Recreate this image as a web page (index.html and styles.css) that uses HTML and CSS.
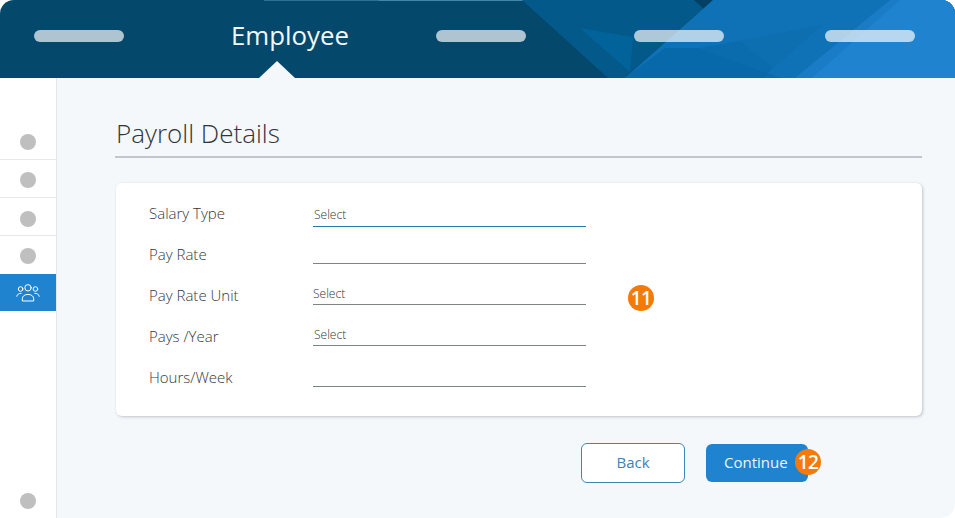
FILE: index.html
```html
<!DOCTYPE html>
<html lang="en">
<head>
<meta charset="utf-8">
<title>Payroll Details</title>
<link rel="stylesheet" href="styles.css">
</head>
<body>
<div class="app">
  <header class="top">
    <svg class="art" viewBox="0 0 955 78" width="955" height="78" aria-hidden="true">
      <rect x="264" y="0" width="115" height="1" fill="#2f6f92"/>
      <rect x="379" y="0" width="250" height="1" fill="#3f88a8"/>
      <polygon points="522,0 713,0 625,78 608,78" fill="#02598a"/>
      <polygon points="580,28 633,37 630,72" fill="#02639a"/>
      <polygon points="694,0 713,0 704,9" fill="#043f64"/>
      <polygon points="713,0 955,0 955,78 625,78" fill="#0f72b6"/>
      <polygon points="740,41 822,25 773,68" fill="#0d6eb0"/>
      <polygon points="625,78 665,48 699,48 780,78" fill="#0769aa"/>
      <polygon points="699,48 740,41 773,68 763,78 780,78" fill="#0a6cad"/>
      <polygon points="890,0 955,0 955,78 795,78" fill="#1a7cc6"/>
      <polygon points="900,0 955,0 955,78 812,78" fill="#2083d0"/>
    </svg>
    <nav class="steps">
      <span class="pill pill-first"></span>
      <span class="current">Employee</span>
      <span class="pill pill-third"></span>
      <span class="pill pill-fourth"></span>
      <span class="pill pill-fifth"></span>
    </nav>
    <span class="caret"></span>
  </header>
  <div class="body">
    <aside class="side">
      <ul class="side-list">
        <li class="side-item first"><span class="dot"></span></li>
        <li class="side-item second"><span class="dot"></span></li>
        <li class="side-item third"><span class="dot"></span></li>
        <li class="side-item fourth"><span class="dot"></span></li>
        <li class="side-item active">
          <svg viewBox="0 0 24 20" width="24" height="20" fill="none" stroke="#fff" stroke-width="1" stroke-linecap="round" aria-hidden="true">
            <circle cx="12" cy="4.800" r="3.200"/>
            <circle cx="4.600" cy="6" r="2.300"/>
            <circle cx="19.400" cy="6" r="2.300"/>
            <path d="M6.300 17.600v-1.800c0-2.600 2.300-4.400 5.700-4.400s5.700 1.800 5.700 4.400v1.800z"/>
            <path d="M.8 13.300c.4-2 2-3.100 4.300-3"/>
            <path d="M23.200 13.300c-.4-2-2-3.100-4.300-3"/>
          </svg>
        </li>
      </ul>
      <span class="dot"></span>
    </aside>
    <main class="main">
      <h1 class="title">Payroll Details</h1>
      <section class="card">
        <div class="form">
          <div class="row"><span class="label">Salary Type</span><span class="field focus">Select</span></div>
          <div class="row"><span class="label">Pay Rate</span><span class="field"></span></div>
          <div class="row"><span class="label">Pay Rate Unit</span><span class="field">Select</span></div>
          <div class="row"><span class="label">Pays /Year</span><span class="field">Select</span></div>
          <div class="row"><span class="label">Hours/Week</span><span class="field"></span></div>
        </div>
        <span class="badge badge-11">11</span>
      </section>
      <div class="actions">
        <button class="btn back" type="button">Back</button>
        <button class="btn next" type="button">Continue<span class="badge badge-12">12</span></button>
      </div>
    </main>
  </div>
</div>
</body>
</html>
```
FILE: styles.css
```css
* { box-sizing: border-box; }
html, body { margin: 0; padding: 0; background: #fff; }
body { font-family: "Open Sans", "Noto Sans", sans-serif; color: #4a4f55; overflow: hidden; }
.app { width: 955px; height: 518px; display: flex; flex-direction: column; overflow: hidden; border-radius: 14px 14px 14px 0; }
.top { position: relative; height: 78px; flex: none; background: #04486c; overflow: hidden; }
.art { position: absolute; left: 0; top: 0; display: block; }
.steps { position: relative; display: flex; align-items: center; height: 72px; padding-left: 34px; }
.pill { width: 90px; height: 12px; border-radius: 6px; background: rgba(255,255,255,.68); flex: none; }
.current { flex: none; width: 119px; margin-left: 107px; margin-top: -2px; color: #f3f8fb; font-size: 25.8px; line-height: 34px; }
.pill-third { margin-left: 86px; }
.pill-fourth { margin-left: 108px; }
.pill-fifth { margin-left: 101px; }
.caret { position: absolute; left: 259px; bottom: 0; width: 0; height: 0; border-left: 18px solid transparent; border-right: 18px solid transparent; border-bottom: 17px solid #f4f8fb; }
.body { flex: 1; display: flex; min-height: 0; }
.side { width: 57px; flex: none; background: #fff; border-right: 1px solid #e4e7ec; display: flex; flex-direction: column; align-items: center; padding-top: 45px; padding-bottom: 9px; justify-content: space-between; }
.side-list { list-style: none; margin: 0; padding: 0; width: 100%; }
.side-item { height: 38px; display: flex; align-items: center; justify-content: center; border-bottom: 1px solid #e6e8eb; }
.side-item.first { height: 37px; padding-top: 2px; }
.side-item.second { padding-top: 3px; }
.side-item.third { padding-top: 4px; }
.side-item.fourth { border-bottom: 0; padding-top: 1px; }
.side-item.active { height: 37px; background: #2083d0; border-bottom: 0; }
.dot { display: block; width: 16px; height: 16px; border-radius: 50%; background: #bfbfbf; }
.main { flex: 1; background: #f4f8fb; padding: 37px 33px 0 58px; border-bottom-right-radius: 14px; }
.title { margin: 0; height: 43px; border-bottom: 2px solid #c3c7cb; font-size: 26px; font-weight: 300; line-height: 36px; color: #30353b; padding-left: 1px; }
.card { position: relative; margin: 25px 0 0 1px; height: 233px; background: #fff; border-radius: 6px; box-shadow: 1px 1px 3px rgba(90,100,110,.35); padding: 11px 0 0 33px; }
.form { display: grid; grid-auto-rows: 41px; width: 470px; }
.row { display: flex; align-items: flex-start; }
.label { width: 164px; flex: none; font-size: 15px; font-weight: 300; line-height: 19px; padding-top: 10px; color: #33383d; }
.field { width: 273px; height: 29px; border-bottom: 1px solid #7f8487; font-size: 12px; font-weight: 300; line-height: 15px; padding-top: 10px; color: #30353a; }
.row:first-child .field { height: 33px; padding: 13px 0 0 1px; border-bottom-color: #2a78ab; }
.row:nth-child(4) .field { padding-left: 1px; }
.badge { display: flex; align-items: center; justify-content: center; width: 26px; height: 26px; border-radius: 50%; background: #f57a0a; color: #fff; font-size: 19px; font-weight: 600; letter-spacing: -.5px; }
.badge-11 { position: absolute; left: 512px; top: 102px; }
.actions { display: flex; justify-content: flex-end; align-items: center; gap: 21px; margin-top: 27px; padding-right: 114px; }
.btn { font-family: inherit; font-size: 15px; line-height: 20px; border-radius: 6px; padding: 0 0 2px; display: block; }
.back { width: 104px; height: 40px; background: #fff; border: 1px solid #3c86b8; color: #3f82b5; }
.next { position: relative; width: 102px; height: 38px; background: #2083d0; border: 0; color: #eaf4fb; text-align: left; padding-left: 18px; }
.badge-12 { position: absolute; left: 89px; top: 5px; }
```
